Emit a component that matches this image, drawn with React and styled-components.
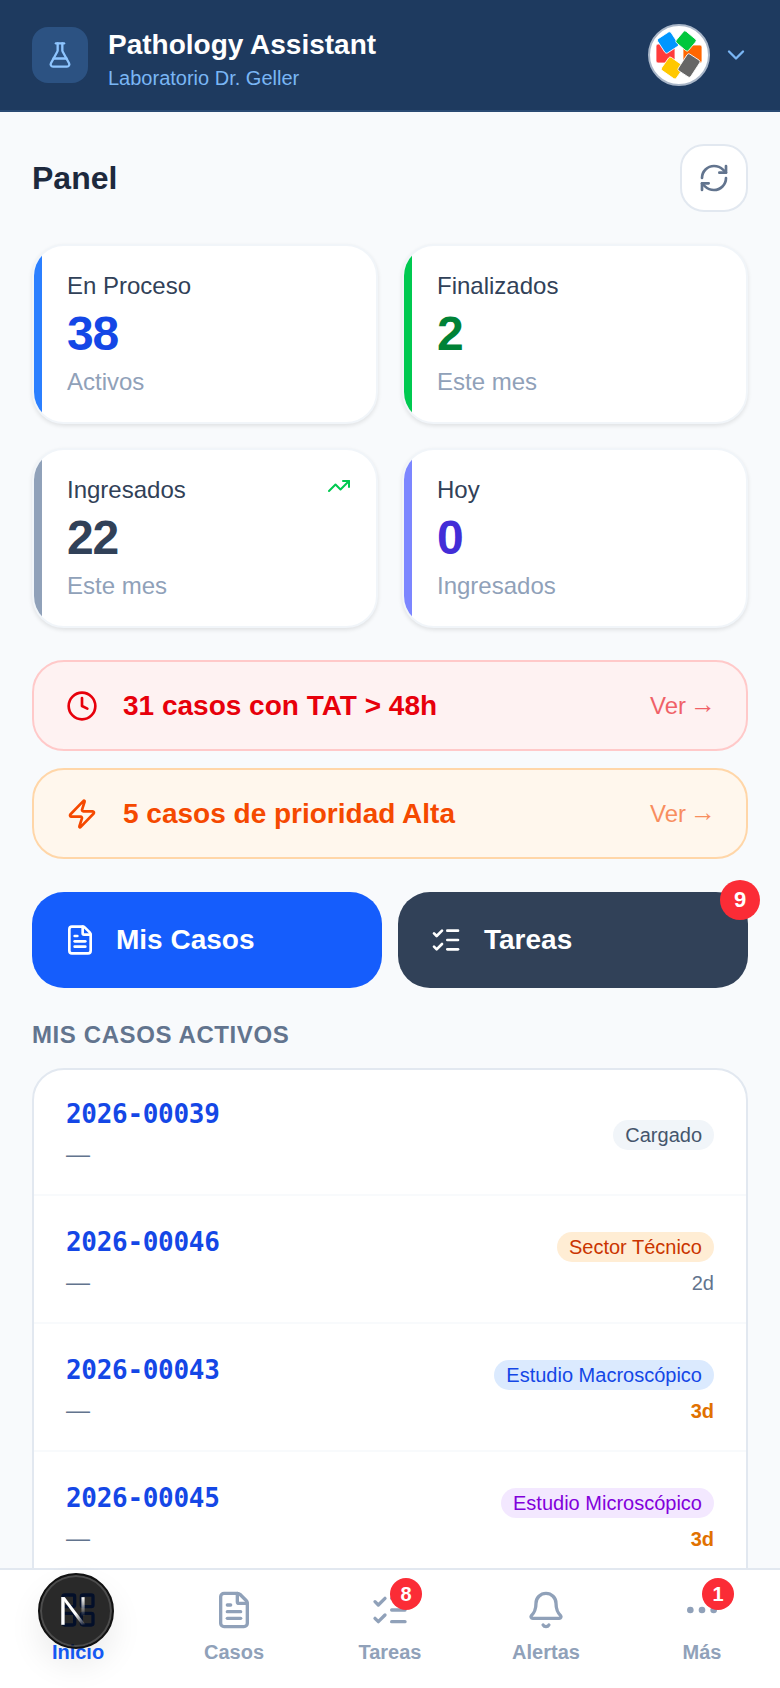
import React from "react";
import styled, { createGlobalStyle } from "styled-components";
import {
  Bell,
  ChevronDown,
  Clock,
  Ellipsis,
  FileText,
  FlaskConical,
  LayoutGrid,
  ListChecks,
  RefreshCw,
  TrendingUp,
  Zap,
} from "lucide-react";

const stats = [
  { label: "En Proceso", value: "38", note: "Activos", accent: "#2b7fff", tone: "#1447e6" },
  { label: "Finalizados", value: "2", note: "Este mes", accent: "#00c950", tone: "#008236" },
  { label: "Ingresados", value: "22", note: "Este mes", accent: "#90a1b9", tone: "#314158", trend: true },
  { label: "Hoy", value: "0", note: "Ingresados", accent: "#7c86ff", tone: "#432dd7" },
];

const cases = [
  { id: "2026-00039", status: "Cargado", bg: "#f1f5f9", fg: "#45556c" },
  { id: "2026-00046", status: "Sector Técnico", bg: "#ffedd4", fg: "#ca3500", age: "2d", ageColor: "#62748e" },
  { id: "2026-00043", status: "Estudio Macroscópico", bg: "#dbeafe", fg: "#1447e6", age: "3d", ageColor: "#e17100", strong: true },
  { id: "2026-00045", status: "Estudio Microscópico", bg: "#f3e8ff", fg: "#8200db", age: "3d", ageColor: "#e17100", strong: true },
];

const navItems = [
  { label: "Inicio", Icon: LayoutGrid, active: true },
  { label: "Casos", Icon: FileText },
  { label: "Tareas", Icon: ListChecks, count: 8 },
  { label: "Alertas", Icon: Bell },
  { label: "Más", Icon: Ellipsis, count: 1 },
];

const logoPieces = [
  { x: 8, y: 20, w: 19, h: 19, r: 0, fill: "#ff3b3b" },
  { x: 35, y: 21, w: 19, h: 18, r: 0, fill: "#ff6600" },
  { x: 12, y: 10, w: 16, h: 17, r: -33, fill: "#0096ff" },
  { x: 30, y: 9.5, w: 16, h: 15, r: 40, fill: "#00c73c" },
  { x: 15.5, y: 36, w: 18, h: 16, r: 35, fill: "#ffc800" },
  { x: 33.5, y: 31.5, w: 15, h: 20, r: 33, fill: "#666666" },
];

function App() {
  return (
    <>
      <GlobalStyle />
      <Page>
        <Header>
          <Brand>
            <BrandIcon>
              <FlaskConical size={28} strokeWidth={2} />
            </BrandIcon>
            <BrandText>
              <BrandTitle>Pathology Assistant</BrandTitle>
              <BrandSub>Laboratorio Dr. Geller</BrandSub>
            </BrandText>
          </Brand>
          <Account>
            <Avatar>
              <svg width="58" height="58" viewBox="2 2 58 58">
                {logoPieces.map((p, i) => (
                  <rect
                    key={i}
                    x={p.x}
                    y={p.y}
                    width={p.w}
                    height={p.h}
                    rx="2"
                    fill={p.fill}
                    stroke="#fff"
                    strokeWidth="0.8"
                    transform={`rotate(${p.r} ${p.x + p.w / 2} ${p.y + p.h / 2})`}
                  />
                ))}
              </svg>
            </Avatar>
            <ChevronDown size={28} color="#7ab6f5" strokeWidth={2} />
          </Account>
        </Header>

        <Main>
          <TitleRow>
            <PageTitle>Panel</PageTitle>
            <RefreshButton>
              <RefreshCw size={32} strokeWidth={2} />
            </RefreshButton>
          </TitleRow>

          <StatGrid>
            {stats.map((s) => (
              <StatCard key={s.label} $accent={s.accent}>
                <StatLabel>{s.label}</StatLabel>
                <StatValue $tone={s.tone}>{s.value}</StatValue>
                <StatNote>{s.note}</StatNote>
                {s.trend && (
                  <Trend>
                    <TrendingUp size={24} strokeWidth={2} />
                  </Trend>
                )}
              </StatCard>
            ))}
          </StatGrid>

          <Alerts>
            <Alert $bg="#fef2f2" $border="#ffc9c9" $fg="#e7000b">
              <AlertMain>
                <Clock size={32} strokeWidth={2} />
                <AlertText>31 casos con TAT &gt; 48h</AlertText>
              </AlertMain>
              <AlertLink>
                <span>Ver</span>
                <Arrow>→</Arrow>
              </AlertLink>
            </Alert>
            <Alert $bg="#fff7ed" $border="#ffd6a8" $fg="#f54900">
              <AlertMain>
                <Zap size={32} strokeWidth={2} />
                <AlertText>5 casos de prioridad Alta</AlertText>
              </AlertMain>
              <AlertLink>
                <span>Ver</span>
                <Arrow>→</Arrow>
              </AlertLink>
            </Alert>
          </Alerts>

          <Actions>
            <ActionButton $bg="#155dfc" $gap={20}>
              <FileText size={32} strokeWidth={2} />
              Mis Casos
            </ActionButton>
            <ActionButton $bg="#314158" $gap={22}>
              <ListChecks size={32} strokeWidth={2} />
              Tareas
              <ActionBadge>9</ActionBadge>
            </ActionButton>
          </Actions>

          <SectionTitle>MIS CASOS ACTIVOS</SectionTitle>

          <CaseList>
            {cases.map((c) => (
              <CaseRow key={c.id}>
                <CaseInfo>
                  <CaseId>{c.id}</CaseId>
                  <CaseMeta>—</CaseMeta>
                </CaseInfo>
                <CaseState>
                  <StatusPill $bg={c.bg} $fg={c.fg}>
                    {c.status}
                  </StatusPill>
                  {c.age && (
                    <CaseAge $color={c.ageColor} $strong={c.strong}>
                      {c.age}
                    </CaseAge>
                  )}
                </CaseState>
              </CaseRow>
            ))}
          </CaseList>
        </Main>

        <BottomNav>
          {navItems.map(({ label, Icon, active, count }) => (
            <NavItem key={label} $active={active}>
              <NavIcon>
                <Icon size={40} strokeWidth={2} />
                {count && <NavBadge>{count}</NavBadge>}
              </NavIcon>
              <span>{label}</span>
            </NavItem>
          ))}
        </BottomNav>

        <DevIndicator>
          <svg width="34" height="34" viewBox="0 0 32 32" fill="none">
            <defs>
              <linearGradient id="nDiag" x1="8" y1="4" x2="27" y2="29" gradientUnits="userSpaceOnUse">
                <stop offset="0.55" stopColor="#fff" />
                <stop offset="1" stopColor="#fff" stopOpacity="0" />
              </linearGradient>
              <linearGradient id="nBar" x1="24" y1="3" x2="24" y2="21" gradientUnits="userSpaceOnUse">
                <stop stopColor="#fff" />
                <stop offset="1" stopColor="#fff" stopOpacity="0" />
              </linearGradient>
            </defs>
            <path d="M4 3h3.2v26H4z" fill="#fff" />
            <path d="M4 3h3.4L27 29h-3.8z" fill="url(#nDiag)" />
            <path d="M23 3h3v19h-3z" fill="url(#nBar)" />
          </svg>
        </DevIndicator>
      </Page>
    </>
  );
}

const GlobalStyle = createGlobalStyle`
  * {
    box-sizing: border-box;
  }
  html, body {
    margin: 0;
    padding: 0;
    overflow: hidden;
  }
  body {
    font-family: "Liberation Sans", Arial, sans-serif;
    background: #f8fafc;
  }
`;

const Page = styled.div`
  width: 780px;
  height: 1688px;
  display: flex;
  flex-direction: column;
  background: #f8fafc;
  overflow: hidden;
`;

const Header = styled.header`
  flex: none;
  height: 112px;
  padding: 0 30px 0 32px;
  display: flex;
  align-items: center;
  justify-content: space-between;
  background: #1e3a5f;
  border-bottom: 2px solid #2a4a73;
`;

const Brand = styled.div`
  display: flex;
  align-items: center;
  gap: 20px;
`;

const BrandIcon = styled.div`
  width: 56px;
  height: 56px;
  border-radius: 16px;
  background: #2c5282;
  color: #8ec5ff;
  display: flex;
  align-items: center;
  justify-content: center;
`;

const BrandText = styled.div`
  padding-top: 9px;
`;

const BrandTitle = styled.div`
  color: #fff;
  font-size: 28px;
  line-height: 34px;
  font-weight: 700;
`;

const BrandSub = styled.div`
  color: #7ab6f5;
  font-size: 20px;
  line-height: 28px;
  margin-top: 2px;
`;

const Account = styled.div`
  display: flex;
  align-items: center;
  gap: 12px;
`;

const Avatar = styled.div`
  width: 62px;
  height: 62px;
  border-radius: 50%;
  background: #fff;
  border: 2px solid #a9b6c8;
  display: flex;
  align-items: center;
  justify-content: center;
`;

const Main = styled.main`
  flex: 1;
  min-height: 0;
  overflow: hidden;
  padding: 32px 32px 0;
`;

const TitleRow = styled.div`
  display: flex;
  align-items: center;
  justify-content: space-between;
`;

const PageTitle = styled.h1`
  margin: 0;
  color: #1d293d;
  font-size: 32px;
  line-height: 40px;
  font-weight: 700;
`;

const RefreshButton = styled.button`
  width: 68px;
  height: 68px;
  padding: 0;
  border: 2px solid #e2e8f0;
  border-radius: 24px;
  background: #fff;
  color: #62748e;
  display: flex;
  align-items: center;
  justify-content: center;
`;

const StatGrid = styled.div`
  margin-top: 32px;
  display: grid;
  grid-template-columns: 1fr 1fr;
  gap: 24px;
`;

const StatCard = styled.div`
  position: relative;
  height: 180px;
  padding: 22px 24px 0 33px;
  border-radius: 32px;
  background: #fff;
  border: 2px solid #f1f5f9;
  box-shadow: 0 2px 4px rgba(0, 0, 0, 0.1);
  overflow: hidden;
  &::before {
    content: "";
    position: absolute;
    left: 0;
    top: 0;
    bottom: 0;
    width: 8px;
    background: ${(p) => p.$accent};
  }
`;

const StatLabel = styled.div`
  color: #314158;
  font-size: 24px;
  line-height: 36px;
`;

const StatValue = styled.div`
  color: ${(p) => p.$tone};
  font-size: 48px;
  line-height: 48px;
  font-weight: 700;
  letter-spacing: -1.2px;
  margin-top: 6px;
`;

const StatNote = styled.div`
  color: #90a1b9;
  font-size: 24px;
  line-height: 36px;
  margin-top: 6px;
`;

const Trend = styled.div`
  position: absolute;
  top: 24px;
  right: 25px;
  color: #00c950;
  line-height: 0;
`;

const Alerts = styled.div`
  margin-top: 32px;
  display: flex;
  flex-direction: column;
  gap: 17px;
`;

const Alert = styled.div`
  height: 91px;
  padding: 0 30px 0 32px;
  display: flex;
  align-items: center;
  justify-content: space-between;
  border-radius: 32px;
  border: 2px solid ${(p) => p.$border};
  background: ${(p) => p.$bg};
  color: ${(p) => p.$fg};
`;

const AlertMain = styled.div`
  display: flex;
  align-items: center;
  gap: 25px;
`;

const AlertText = styled.span`
  font-size: 28px;
  font-weight: 700;
`;

const AlertLink = styled.span`
  display: inline-flex;
  align-items: center;
  gap: 4px;
  font-size: 24px;
  opacity: 0.6;
`;

const Arrow = styled.span`
  font-size: 26px;
  line-height: 1;
  margin-top: -4px;
`;

const Actions = styled.div`
  margin-top: 33px;
  display: grid;
  grid-template-columns: 1fr 1fr;
  gap: 16px;
`;

const ActionButton = styled.button`
  position: relative;
  height: 96px;
  padding: 0 0 0 32px;
  border: none;
  border-radius: 32px;
  background: ${(p) => p.$bg};
  color: #fff;
  font-family: inherit;
  font-size: 28px;
  font-weight: 700;
  display: flex;
  align-items: center;
  gap: ${(p) => p.$gap}px;
`;

const ActionBadge = styled.span`
  position: absolute;
  top: -12px;
  right: -12px;
  width: 40px;
  height: 40px;
  border-radius: 50%;
  background: #fb2c36;
  color: #fff;
  font-size: 22px;
  display: flex;
  align-items: center;
  justify-content: center;
`;

const SectionTitle = styled.h2`
  margin: 33px 0 19px;
  color: #62748e;
  font-size: 24px;
  line-height: 28px;
  font-weight: 700;
  letter-spacing: 0.6px;
`;

/* the list runs on below the nav bar, so its bottom corners stay out of view */
const CaseList = styled.div`
  min-height: 600px;
  border: 2px solid #e2e8f0;
  border-radius: 32px;
  background: #fff;
`;

const CaseRow = styled.div`
  padding: 30px 32px 25px;
  display: flex;
  align-items: center;
  justify-content: space-between;
  & + & {
    padding-top: 32px;
    border-top: 2px solid #f8fafc;
  }
`;

const CaseInfo = styled.div`
  display: flex;
  flex-direction: column;
  gap: 11px;
`;

const CaseId = styled.div`
  color: #1447e6;
  font-family: "DejaVu Sans Mono", "Liberation Mono", monospace;
  font-size: 26px;
  line-height: 28px;
  font-weight: 700;
  letter-spacing: -0.3px;
`;

const CaseMeta = styled.div`
  color: #62748e;
  font-size: 24px;
  line-height: 30px;
`;

const CaseState = styled.div`
  display: flex;
  flex-direction: column;
  align-items: flex-end;
  gap: 11px;
`;

const StatusPill = styled.span`
  height: 30px;
  padding: 0 12px;
  border-radius: 15px;
  background: ${(p) => p.$bg};
  color: ${(p) => p.$fg};
  font-size: 20px;
  line-height: 30px;
`;

const CaseAge = styled.span`
  color: ${(p) => p.$color};
  font-size: 20px;
  line-height: 20px;
  font-weight: ${(p) => (p.$strong ? 700 : 400)};
`;

const BottomNav = styled.nav`
  flex: none;
  height: 120px;
  background: #fff;
  border-top: 2px solid #e2e8f0;
  display: grid;
  grid-template-columns: repeat(5, 156px);
`;

const NavItem = styled.div`
  padding-top: 20px;
  display: flex;
  flex-direction: column;
  align-items: center;
  gap: 7px;
  color: ${(p) => (p.$active ? "#155dfc" : "#90a1b9")};
  font-size: 20px;
  line-height: 30px;
  font-weight: 700;
`;

const NavIcon = styled.div`
  position: relative;
  width: 40px;
  height: 40px;
`;

const NavBadge = styled.span`
  position: absolute;
  top: -12px;
  right: -12px;
  width: 32px;
  height: 32px;
  border-radius: 50%;
  background: #fb2c36;
  color: #fff;
  font-size: 20px;
  display: flex;
  align-items: center;
  justify-content: center;
`;

const DevIndicator = styled.div`
  position: fixed;
  left: 38px;
  top: 1573px;
  width: 76px;
  height: 76px;
  padding-right: 4px;
  border-radius: 50%;
  background: rgba(0, 0, 0, 0.84);
  border: 2px solid #111;
  box-shadow: inset 0 0 0 2px rgba(255, 255, 255, 0.16), 0 16px 32px rgba(0, 0, 0, 0.08);
  display: flex;
  align-items: center;
  justify-content: center;
`;

export default App;
